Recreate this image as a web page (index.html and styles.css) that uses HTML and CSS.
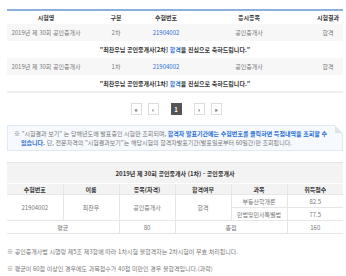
FILE: index.html
```html
<!DOCTYPE html>
<html lang="ko">
<head>
    <meta charset="UTF-8">
    <meta name="viewport" content="width=device-width, initial-scale=1.0">
    <title>시험결과 조회</title>
    <link rel="stylesheet" href="styles.css">
</head>
<body>
    <div class="container">
        <table class="result-table">
            <thead>
                <tr>
                    <th class="c-name">시험명</th>
                    <th class="c-type">구분</th>
                    <th class="c-num">수험번호</th>
                    <th class="c-item">응시종목</th>
                    <th class="c-res">시험결과</th>
                </tr>
            </thead>
            <tbody>
                <tr class="data-row">
                    <td>2019년 제 30회 공인중개사</td>
                    <td>2차</td>
                    <td><a href="#" class="link">21904002</a></td>
                    <td>공인중개사</td>
                    <td>합격</td>
                </tr>
                <tr class="msg-row">
                    <td colspan="5">"최찬우님 공인중개사[2차] <span class="blue">합격</span>을 진심으로 축하드립니다."</td>
                </tr>
                <tr class="data-row">
                    <td>2019년 제 30회 공인중개사</td>
                    <td>1차</td>
                    <td><a href="#" class="link">21904002</a></td>
                    <td>공인중개사</td>
                    <td>합격</td>
                </tr>
                <tr class="msg-row last">
                    <td colspan="5">"최찬우님 공인중개사[1차] <span class="blue">합격</span>을 진심으로 축하드립니다."</td>
                </tr>
            </tbody>
        </table>

        <div class="paging">
            <a href="#" class="page-btn">&laquo;</a>
            <a href="#" class="page-btn">&lsaquo;</a>
            <a href="#" class="page-btn active">1</a>
            <a href="#" class="page-btn">&rsaquo;</a>
            <a href="#" class="page-btn">&raquo;</a>
        </div>

        <div class="notice">
            <p>※ "시험결과 보기" 는 당해년도에 발표중인 시험만 조회되며, <strong class="blue">합격자 발표기간에는 수험번호를 클릭하면 득점내역을 조회할 수 있습니다.</strong> 단, 전문자격의 "시험결과보기"는 해당시험의 합격자발표기간(발표일로부터 60일간)만 조회됩니다.</p>
        </div>

        <table class="score-table">
            <thead>
                <tr class="title-row">
                    <th colspan="6">2019년 제 30회 공인중개사 (1차) - 공인중개사</th>
                </tr>
                <tr class="head-row">
                    <th class="s1">수험번호</th>
                    <th class="s2">이름</th>
                    <th class="s3">종목(자격)</th>
                    <th class="s4">합격여부</th>
                    <th class="s5">과목</th>
                    <th class="s6">취득점수</th>
                </tr>
            </thead>
            <tbody>
                <tr>
                    <td rowspan="2">21904002</td>
                    <td rowspan="2">최찬우</td>
                    <td rowspan="2">공인중개사</td>
                    <td rowspan="2">합격</td>
                    <td>부동산학개론</td>
                    <td>82.5</td>
                </tr>
                <tr>
                    <td>민법및민사특별법</td>
                    <td>77.5</td>
                </tr>
                <tr>
                    <td colspan="2">평균</td>
                    <td>80</td>
                    <td colspan="2">총점</td>
                    <td>160</td>
                </tr>
            </tbody>
        </table>

        <ul class="notes">
            <li>※ 공인중개사법 시행령 제5조 제3항에 따라 1차시험 불합격자는 2차시험이 무효 처리됩니다.</li>
            <li>※ 평균이 60점 이상인 경우에도 과목점수가 40점 미만인 경우 불합격입니다.(과락)</li>
        </ul>
    </div>
</body>
</html>
```

FILE: styles.css
```css
* {
    margin: 0;
    padding: 0;
    box-sizing: border-box;
}

body {
    background: #fff;
    font-family: 'Noto Sans CJK KR', 'Noto Sans', sans-serif;
    font-size: 6px;
    color: #777;
}

.container {
    width: 336px;
    margin: 9px 0 0 7px;
}

table {
    width: 100%;
    border-collapse: collapse;
    table-layout: fixed;
}

.blue {
    color: #2a6fd6;
}

.link {
    color: #2a6fd6;
    text-decoration: none;
}

/* result table */
.result-table {
    border-top: 2px solid #8bb0dc;
}

.result-table th {
    height: 14px;
    font-weight: bold;
    color: #333;
    text-align: center;
}

.c-name { width: 78px; }
.c-type { width: 62px; }
.c-num { width: 38px; }
.c-item { width: 128px; }
.c-res { width: 30px; }

.result-table td {
    text-align: center;
    height: 17px;
}

.data-row td {
    background: #f7f7f7;
}

.msg-row td {
    color: #333;
    font-weight: bold;
}

.msg-row.last td {
    border-bottom: 2px solid #f0f0f0;
}

/* paging */
.paging {
    display: flex;
    justify-content: center;
    gap: 6px;
    margin-top: 10px;
    margin-left: 2px;
}

.page-btn {
    width: 11px;
    height: 12px;
    display: flex;
    align-items: center;
    justify-content: center;
    border: 1px solid #ddd;
    color: #333;
    font-weight: bold;
    text-decoration: none;
}

.page-btn.active {
    background: #555;
    border-color: #555;
    color: #fff;
    margin: 0 6px;
}

/* notice */
.notice {
    position: relative;
    margin-top: 10px;
    background: #f6f9fd;
    border: 1px solid #e3e9f1;
    padding: 3px 12px 3px 6px;
    line-height: 9px;
}

.notice::after {
    content: '';
    position: absolute;
    top: -1px;
    right: -1px;
    width: 8px;
    height: 8px;
    background: linear-gradient(225deg, #fff 50%, #dfe4ea 50%);
}

.notice p {
    padding-left: 7px;
    text-indent: -7px;
}

/* score table */
.score-table {
    margin-top: 11px;
}

.score-table th,
.score-table td {
    text-align: center;
    border: 1px solid #e6e6e6;
}

.title-row th {
    height: 21px;
    background: #f3f3f3;
    color: #333;
    font-weight: bold;
    border-bottom: 1px solid #fff;
}

.head-row th {
    height: 11px;
    background: #f3f3f3;
    color: #333;
    font-weight: bold;
}

.score-table td {
    height: 13px;
}

.score-table tr > :first-child { border-left: none; }
.score-table tr > :last-child { border-right: none; }

.s1 { width: 42px; }
.s2 { width: 33px; }
.s3 { width: 76px; }
.s4 { width: 35px; }
.s5 { width: 109px; }
.s6 { width: 41px; }

/* notes */
.notes {
    list-style: none;
    margin-top: 13px;
}

.notes li {
    line-height: 9px;
    margin-bottom: 8px;
}
```
